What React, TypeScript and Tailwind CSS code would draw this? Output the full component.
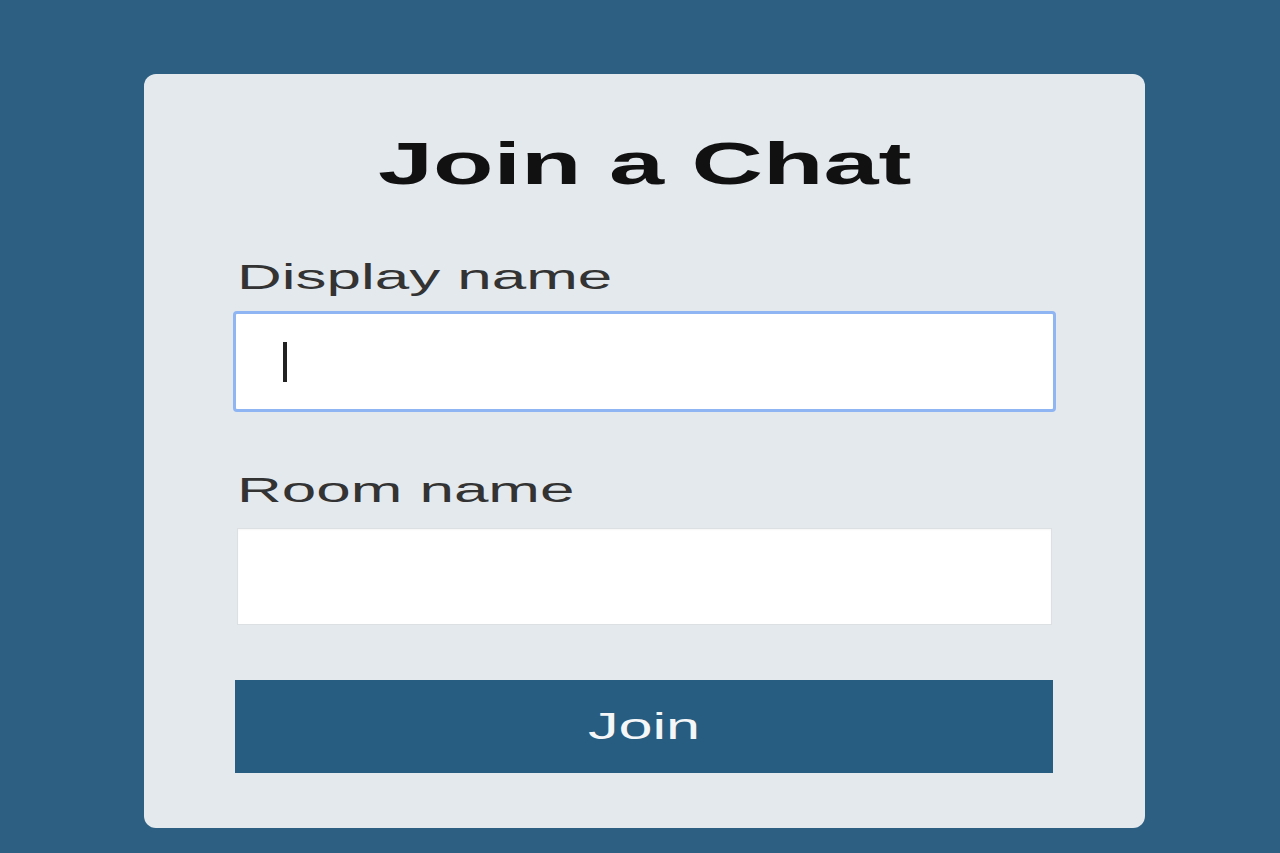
export default function App() {
  return (
    <div className="min-h-[853px] w-full bg-[#2c5f81] pt-[74px] pl-[144px] font-['Liberation_Sans',Arial,sans-serif]">
      <div className="flex h-[754px] w-[1001px] flex-col rounded-[12px] bg-[#e4e9ee] px-[93px] pt-[50px]">
        <h1 className="text-center text-[60px] leading-[80px] font-bold text-[#111]">
          <span className="inline-block scale-x-[1.65]">Join a Chat</span>
        </h1>

        <label className="mt-[53px] text-[35px] leading-[40px] text-[#333]">
          <span className="inline-block origin-left scale-x-[1.77]">Display name</span>
        </label>
        <div className="relative mt-[14px] -ml-[4px] h-[101px] w-[823px] rounded-[4px] border-[3px] border-[#8fb5f2] bg-white">
          <span className="absolute top-[28px] left-[47px] h-[40px] w-[4px] bg-[#222]" />
        </div>

        <label className="mt-[58px] text-[35px] leading-[40px] text-[#333]">
          <span className="inline-block origin-left scale-x-[1.77]">Room name</span>
        </label>
        <div className="mt-[18px] h-[97px] w-[815px] border border-[#dde0e3] bg-white shadow-[inset_0_1px_2px_rgba(0,0,0,0.04)]" />

        <button className="mt-[55px] -ml-[2px] flex h-[93px] w-[818px] items-center justify-center bg-[#275d80] text-[36px] text-[#f4f6f8]">
          <span className="inline-block scale-x-[1.7]">Join</span>
        </button>
      </div>
    </div>
  );
}
